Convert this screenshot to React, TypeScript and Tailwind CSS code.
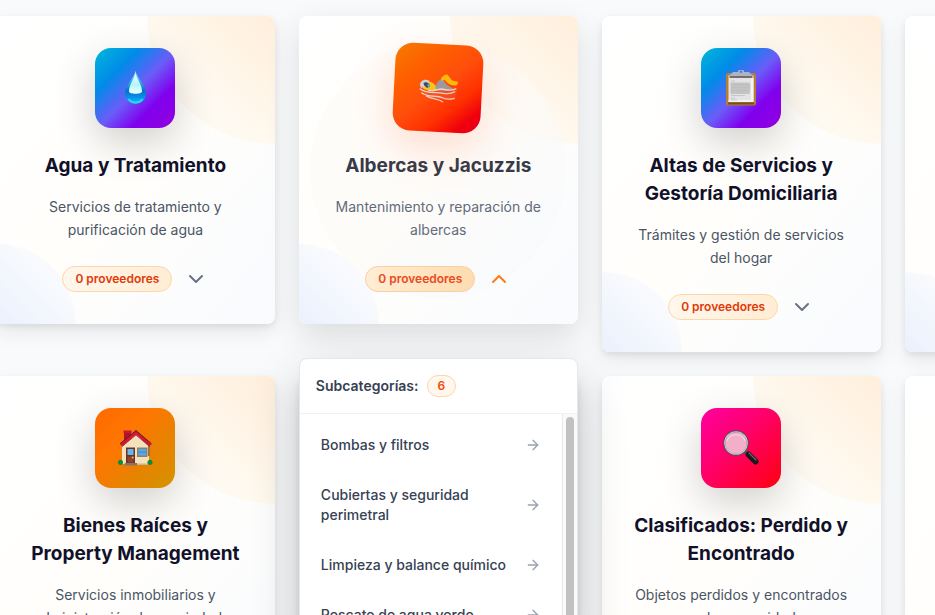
import type { ReactNode } from "react";
import { ArrowRight, ChevronDown, ChevronUp } from "lucide-react";

function DropIcon() {
  return (
    <svg viewBox="0 0 36 36" className="size-9" aria-hidden="true">
      <defs>
        <linearGradient id="drop-body" x1="0" y1="0" x2="0" y2="1">
          <stop offset="0" stopColor="#a5ecfb" />
          <stop offset="0.3" stopColor="#35b4ec" />
          <stop offset="0.6" stopColor="#0670c8" />
          <stop offset="0.8" stopColor="#0591ec" />
          <stop offset="1" stopColor="#16c4f2" />
        </linearGradient>
        <linearGradient id="drop-shine" x1="0" y1="0" x2="0" y2="1">
          <stop offset="0" stopColor="#ffffff" />
          <stop offset="0.55" stopColor="#b5f4fc" />
          <stop offset="1" stopColor="#ecffff" />
        </linearGradient>
      </defs>
      <path d="M18.500 1C17 8 8 15 8 23.500a10.500 10.500 0 0 0 21 0C29 15 20 8 18.500 1Z" fill="url(#drop-body)" />
      <path d="M18.500 3C17.500 9 12 14 12 21.500c0 3 13 3 13 0C25 14 19.500 9 18.500 3Z" fill="url(#drop-shine)" />
      <path d="M11.500 29c3 4.500 11 4.500 14 0" stroke="#35d8fa" strokeWidth="1.500" fill="none" />
    </svg>
  );
}

function SwimmerIcon() {
  return (
    <svg viewBox="0 0 42 32" className="h-7 w-[37px]" aria-hidden="true">
      <defs>
        <linearGradient id="wave" x1="0" y1="0" x2="1" y2="1">
          <stop offset="0" stopColor="#e8e4e4" />
          <stop offset="1" stopColor="#f6b5a2" />
        </linearGradient>
      </defs>
      <path d="M2 16c7 6 24 6 38 0 1 4-1 12-6 12-14 1-29-3-32-12Z" fill="#e95c39" opacity="0.45" />
      <path d="M16 16c2-2 3-7 8-10l5 6 7 4c-3 3-14 4-20 1Z" fill="#9b999b" />
      <path d="M23 5.500c2-2 4-4 6-4 2 .5 3 4 6 6 2 1 4 .5 6 1l-1 3.500c-4 1-8 0-10-2-2-1-2-2.500-3-3l-3 1.500Z" fill="#fbb90b" />
      <path d="M3 14c1-5 6-6 9-4 4 1 7 4 6 8-4 2-10 1-13-1Z" fill="#fcc21c" />
      <path d="M1.500 14c0-5 5-7.500 9.500-5l-2 5-6 3Z" fill="#d1d0d2" />
      <path d="M5 11.500c2-1.500 4-1 6 .5l1 3-3 1.500-3-2.500Z" fill="#334b70" />
      <path d="M9 13l2-.5 1 2-2 1Z" fill="#4bb9dc" />
      <path d="M2 18c7 5 17 2 23 3 6 1 10 0 13-2M4 22c8 5 15 1 22 4 5 2 8 1 12 0M11 19c7 1 10-3 15-2 5 1 9 1 13-1M9 25c6 3 12 2 17 5" fill="none" stroke="url(#wave)" strokeWidth="1.400" strokeLinecap="round" />
    </svg>
  );
}

function ClipboardIcon() {
  return (
    <svg viewBox="0 0 36 36" className="size-9" aria-hidden="true">
      <rect x="3" y="3" width="30" height="32.500" rx="2" fill="#b57e31" />
      <path d="M5 32.500h26v2H5Z" fill="#79501b" />
      <path d="M5.500 5.500h25v26.500h-25Z" fill="#e4e4e5" />
      <path d="M28 8h2.500v24h-25V30H28Z" fill="#f4f4f4" />
      <path d="M10 2h5c0-2 1-2.500 3-2.500s3 .5 3 2.500h5l4 4v2H6V6Z" fill="#a7b5c4" />
      <path d="M7 6h22v2H7Z" fill="#776e6c" />
      <circle cx="18" cy="1.800" r="1.200" fill="#6671dc" />
      <path d="M7.500 12.500h19l1 3-1 8.500h-19Z" fill="#c3c3c4" />
      <path d="M8 11h4M8 14.500h18M8 17.500h18M8 20.500h18M8 25.500h14M8 28h4M8 30h6" stroke="#bcbcbe" strokeWidth="0.700" />
    </svg>
  );
}

function HouseIcon() {
  return (
    <svg viewBox="0 0 36 36" className="size-9" aria-hidden="true">
      <path d="M7 1h7v11H7Z" fill="#af1429" />
      <path d="M6.500 .5h8v2.500h-8Z" fill="#c9182f" />
      <path d="M5 16 19 3l13 13v18H5Z" fill="#f4e2bd" />
      <path d="M31 16h2v10h-2Z" fill="#9b7443" />
      <path d="M19 .5 3 14l2 2.500L19 4.500 32.500 16.500l2-2.500Z" fill="#d9152f" />
      <path d="M3 13.800 19 .5l15.500 13.300" fill="none" stroke="#54202a" strokeWidth="1" />
      <path d="M5 16.500 19 5l13.500 11.500" fill="none" stroke="#8f1c26" strokeWidth="0.800" />
      <path d="M9 17.500h9v16H9Z" fill="#6d3024" />
      <path d="M10.500 19h6v6h-6Z" fill="#62b7ef" />
      <path d="M10.500 26.500h6v6h-6Z" fill="#8c4330" />
      <circle cx="15.700" cy="27.500" r="1" fill="#f5c132" />
      <path d="M20 17.500h10.500V27H20Z" fill="#8f806e" />
      <path d="M21.500 19h7.500v6.500h-7.500Z" fill="#56a9e8" />
      <path d="M21.500 22h7.500" stroke="#387fb9" strokeWidth="0.800" />
      <path d="M7 33.500h24v1.500H7Z" fill="#c9b48b" />
      <path d="M8 33h12v2.500H7Z" fill="#85736c" />
      <ellipse cx="3.500" cy="32.300" rx="2.500" ry="2.600" fill="#128a3b" />
      <ellipse cx="33" cy="32.300" rx="2.500" ry="2.600" fill="#128a3b" />
    </svg>
  );
}

function MagnifierIcon() {
  return (
    <svg viewBox="0 0 36 36" className="size-9" aria-hidden="true">
      <path d="m22 21 3 3" stroke="#55565b" strokeWidth="3" />
      <path d="m25.500 24.500 7 7" stroke="#17191d" strokeWidth="6" strokeLinecap="round" />
      <path d="m26 23 7 7" stroke="#656a70" strokeWidth="1.200" strokeLinecap="round" />
      <circle cx="13" cy="13" r="11.800" fill="#f3afca" stroke="#4b5057" strokeWidth="2" />
      <circle cx="13" cy="13" r="11.300" fill="none" stroke="#c5c8cb" strokeWidth="1.100" />
      <path d="M4 11a9.500 9.500 0 0 1 18 0" fill="none" stroke="#f8cede" strokeWidth="1.200" />
    </svg>
  );
}

type Category = {
  name: string;
  description: string;
  tile: string;
  icon: ReactNode;
  open?: boolean;
};

const blueTile =
  "bg-[linear-gradient(135deg,#00b8d8_0%,#008be9_28%,#6b5cf8_52%,#8000ee_73%,#9300dc_100%)]";

const firstRow: Category[] = [
  {
    name: "Agua y Tratamiento",
    description: "Servicios de tratamiento y purificación de agua",
    tile: blueTile,
    icon: <DropIcon />,
  },
  {
    name: "Albercas y Jacuzzis",
    description: "Mantenimiento y reparación de albercas",
    tile: "bg-[linear-gradient(140deg,#f57c00_0%,#ff5e00_28%,#ff4e0c_50%,#ff3000_70%,#f0000c_86%,#e60022_100%)]",
    icon: <SwimmerIcon />,
    open: true,
  },
  {
    name: "Altas de Servicios y Gestoría Domiciliaria",
    description: "Trámites y gestión de servicios del hogar",
    tile: blueTile,
    icon: <ClipboardIcon />,
  },
];

const bienesRaices: Category = {
  name: "Bienes Raíces y Property Management",
  description: "Servicios inmobiliarios y administración de propiedades",
  tile: "bg-[linear-gradient(135deg,#ff6900_0%,#ff7600_35%,#e88200_65%,#d39400_100%)]",
  icon: <HouseIcon />,
};

const clasificados: Category = {
  name: "Clasificados: Perdido y Encontrado",
  description: "Objetos perdidos y encontrados en la comunidad",
  tile: "bg-[linear-gradient(135deg,#ff00a0_0%,#ff0068_45%,#ff0010_100%)]",
  icon: <MagnifierIcon />,
};

const subcategories = [
  "Bombas y filtros",
  "Cubiertas y seguridad perimetral",
  "Limpieza y balance químico",
  "Rescate de agua verde",
];

function CardShell({ raised, children }: { raised?: boolean; children?: ReactNode }) {
  return (
    <article
      className={`relative overflow-hidden rounded-lg bg-linear-to-br from-white via-[#fffefb] to-[#f9fbff] ${
        raised
          ? "shadow-[0_12px_32px_rgba(0,0,0,0.12)]"
          : "shadow-[0_8px_20px_rgba(0,0,0,0.08),0_3px_6px_rgba(0,0,0,0.07)]"
      } ${children ? "" : "h-full"}`}
    >
      <div className="absolute -top-32 -right-32 size-64 rounded-full bg-linear-to-bl from-[#ffe0bd] via-[#ffeedb] via-50% to-[#fffaf1] to-80%" />
      <div className="absolute -bottom-20 -left-20 size-40 rounded-full bg-linear-to-tr from-[#dde8fc] via-[#eaf0fd] via-50% to-[#f8fafd] to-80%" />
      {raised && (
        <div className="absolute inset-0 flex items-center justify-center">
          <div className="size-64 rounded-full bg-linear-to-br from-[#fff9f0]/30 via-[#fcfaf7]/50 to-[#f6f9fd]/70" />
        </div>
      )}
      {children}
    </article>
  );
}

function CategoryCard({ category }: { category: Category }) {
  const { name, description, tile, icon, open } = category;
  return (
    <CardShell raised={open}>
      <div className="relative flex flex-col items-center px-7 py-8 text-center">
        <div
          className={`mb-6 flex size-20 items-center justify-center rounded-2xl ${tile} ${
            open
              ? "scale-110 rotate-3 shadow-[0_14px_40px_rgba(255,90,30,0.2)]"
              : "shadow-[0_14px_40px_rgba(0,0,0,0.19)]"
          }`}
        >
          {icon}
        </div>
        <h3
          className={`mb-[15px] text-[19px] leading-7 font-bold ${
            open ? "text-[#373a49]" : "text-[#11112a]"
          }`}
        >
          {name}
        </h3>
        <p
          className={`mb-[25px] text-sm leading-[23px] ${
            open ? "text-[#636b7a]" : "text-[#4a5565]"
          }`}
        >
          {description}
        </p>
        <div className="flex items-center gap-3">
          <span
            className={`rounded-full border px-3 py-1 text-xs leading-4 font-semibold ${
              open
                ? "border-[#fbcfa0] bg-linear-to-r from-[#ffedd4] to-[#fddcb0] text-[#e94a1c]"
                : "border-[#ffd6a7] bg-linear-to-r from-[#fff7ed] to-[#ffedd4] text-[#e03a08]"
            }`}
          >
            0 proveedores
          </span>
          <button type="button" aria-label={`Subcategorías de ${name}`} aria-expanded={!!open}>
            {open ? (
              <ChevronUp className="size-6 text-[#ff7a18]" />
            ) : (
              <ChevronDown className="size-6 text-[#6a7282]" />
            )}
          </button>
        </div>
      </div>
    </CardShell>
  );
}

function SubcategoryPanel() {
  return (
    <section className="absolute inset-x-0 top-full z-10 mt-1.5 overflow-hidden rounded-lg border border-[#e5e7eb] bg-white shadow-[0_20px_50px_rgba(0,0,0,0.2)]">
      <header className="flex items-center gap-2 border-b border-[#f0f1f3] p-4">
        <h4 className="text-sm leading-5 font-semibold text-[#364153]">Subcategorías:</h4>
        <span className="rounded-full border border-[#ffd6a7] bg-[#fff7ed] px-2.5 py-0.5 text-xs leading-4 font-semibold text-[#f54900]">
          6
        </span>
      </header>
      <div className="flex">
        <ul className="flex-1 space-y-1 p-2">
          {subcategories.map((item) => (
            <li key={item}>
              <button
                type="button"
                className="flex w-full items-center justify-between rounded-lg border border-transparent px-3 py-3 text-left text-sm leading-5 font-medium text-[#364153]"
              >
                <span>{item}</span>
                <ArrowRight className="size-4 shrink-0 text-[#99a1af]" />
              </button>
            </li>
          ))}
        </ul>
        <div className="flex w-[15px] justify-center border-l border-[#e8e8e8] bg-[#fafafa] pt-[3px]">
          <div className="w-2 rounded-full bg-[#c1c1c1]" />
        </div>
      </div>
    </section>
  );
}

export default function App() {
  return (
    <main className="h-screen overflow-hidden bg-[#f9fafc] pt-4 font-[Inter,sans-serif]">
      <div className="-ml-1 grid w-[127%] grid-cols-4 gap-6">
        {firstRow.map((category) => (
          <div key={category.name} className="relative">
            <CategoryCard category={category} />
            {category.open && <SubcategoryPanel />}
          </div>
        ))}
        <CardShell />
        <CategoryCard category={bienesRaices} />
        <CardShell />
        <CategoryCard category={clasificados} />
        <CardShell />
      </div>
    </main>
  );
}
